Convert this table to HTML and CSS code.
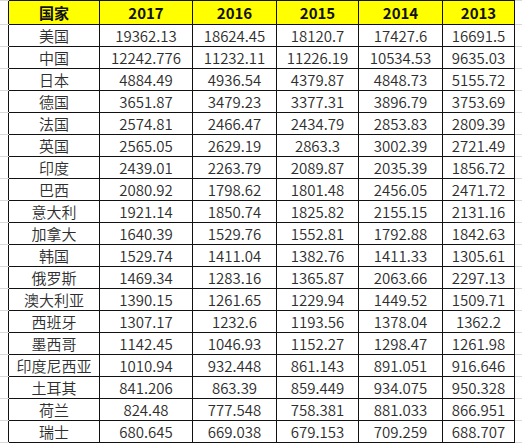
FILE: index.html
```html
<!DOCTYPE html>
<html lang="zh">
<head>
  <meta charset="UTF-8">
  <title>GDP</title>
  <link rel="stylesheet" href="styles.css">
</head>
<body>

<table class="sheet">
  <colgroup>
    <col class="gap-left">
    <col class="c-name">
    <col class="c-2017">
    <col class="c-2016">
    <col class="c-2015">
    <col class="c-2014">
    <col class="c-2013">
    <col class="gap-right">
  </colgroup>
  <thead>
    <tr>
      <td class="gap"></td>
      <th>国家</th><th>2017</th><th>2016</th><th>2015</th><th>2014</th><th>2013</th>
      <td class="gap"></td>
    </tr>
  </thead>
  <tbody id="rows">
    <!-- rows filled by script -->
  </tbody>
</table>

<script>
  const data = [
    ['美国', '19362.13', '18624.45', '18120.7', '17427.6', '16691.5'],
    ['中国', '12242.776', '11232.11', '11226.19', '10534.53', '9635.03'],
    ['日本', '4884.49', '4936.54', '4379.87', '4848.73', '5155.72'],
    ['德国', '3651.87', '3479.23', '3377.31', '3896.79', '3753.69'],
    ['法国', '2574.81', '2466.47', '2434.79', '2853.83', '2809.39'],
    ['英国', '2565.05', '2629.19', '2863.3', '3002.39', '2721.49'],
    ['印度', '2439.01', '2263.79', '2089.87', '2035.39', '1856.72'],
    ['巴西', '2080.92', '1798.62', '1801.48', '2456.05', '2471.72'],
    ['意大利', '1921.14', '1850.74', '1825.82', '2155.15', '2131.16'],
    ['加拿大', '1640.39', '1529.76', '1552.81', '1792.88', '1842.63'],
    ['韩国', '1529.74', '1411.04', '1382.76', '1411.33', '1305.61'],
    ['俄罗斯', '1469.34', '1283.16', '1365.87', '2063.66', '2297.13'],
    ['澳大利亚', '1390.15', '1261.65', '1229.94', '1449.52', '1509.71'],
    ['西班牙', '1307.17', '1232.6', '1193.56', '1378.04', '1362.2'],
    ['墨西哥', '1142.45', '1046.93', '1152.27', '1298.47', '1261.98'],
    ['印度尼西亚', '1010.94', '932.448', '861.143', '891.051', '916.646'],
    ['土耳其', '841.206', '863.39', '859.449', '934.075', '950.328'],
    ['荷兰', '824.48', '777.548', '758.381', '881.033', '866.951'],
    ['瑞士', '680.645', '669.038', '679.153', '709.259', '688.707']
  ];

  const rows = document.getElementById('rows');
  data.forEach(item => {
    const tr = document.createElement('tr');
    tr.innerHTML = '<td class="gap"></td>' +
      item.map(v => `<td>${v}</td>`).join('') +
      '<td class="gap"></td>';
    rows.appendChild(tr);
  });
</script>

</body>
</html>
```

FILE: styles.css
```css
body {
  margin: 0;
  background: #fff;
  font-family: "Noto Sans CJK SC", "Noto Sans", sans-serif;
  overflow: hidden;
}
.sheet {
  border-collapse: collapse;
  table-layout: fixed;
  width: 526px;
  margin-left: -1px;
  color: #2e2e2e;
}
.gap-left { width: 9px; }
.c-name { width: 91px; }
.c-2017 { width: 93px; }
.c-2016 { width: 84px; }
.c-2015 { width: 82px; }
.c-2014 { width: 84px; }
.c-2013 { width: 72px; }
.gap-right { width: 11px; }

.sheet th,
.sheet td {
  border: 1px solid #111;
  padding: 0;
  text-align: center;
  font-size: 15px;
  font-weight: 350;
  line-height: 20px;
  height: 21px;
  white-space: nowrap;
  overflow: hidden;
}
.sheet th {
  background: #ffff00;
  font-weight: bold;
  height: 23px;
  color: #111;
}
.sheet td.gap {
  border-top: 1px solid #d8d8d8;
  border-bottom: 1px solid #d8d8d8;
  border-left: none;
  border-right: none;
}
.sheet td.gap:first-child {
  border-left: 1px solid #e2e2e2;
}
```
